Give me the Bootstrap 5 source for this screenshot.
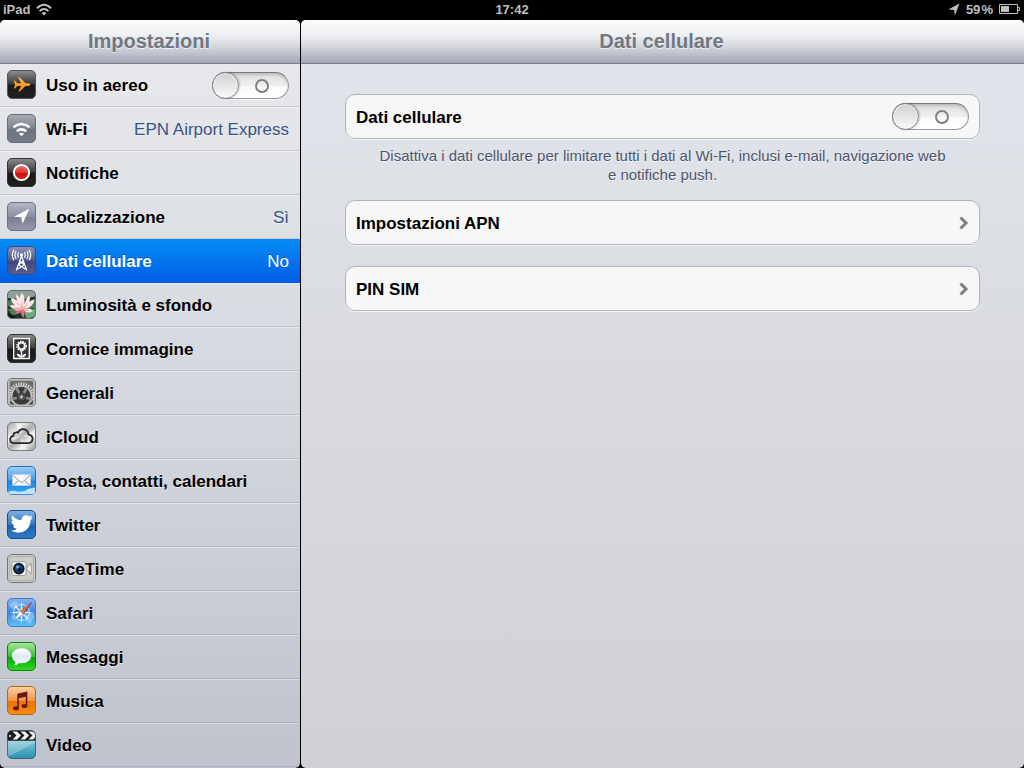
<!DOCTYPE html>
<html lang="it">
<head>
<meta charset="utf-8">
<meta name="viewport" content="width=device-width, initial-scale=1">
<title>Impostazioni</title>
<link href="https://cdn.jsdelivr.net/npm/bootstrap@5.3.0/dist/css/bootstrap.min.css" rel="stylesheet">
<style>
  body { background: #000; font-family: "Liberation Sans", Arial, sans-serif; font-size: 17px; line-height: 22px; color: #000; }
  .status-bar { height: 20px; padding: 0 3px; color: #bfbfbf; font-size: 13px; line-height: 20px; font-weight: bold; }
  .status-bar > div { flex: 1 1 0; gap: 6px; }
  .status-bar svg { display: block; }
  .side-pane { flex: 0 0 300px; background: linear-gradient(#e9eaee, #dcdfe4 30%, #bfc3cd); border-radius: 5px; overflow: hidden; }
  .main-pane { background: linear-gradient(#e2e6ec, #d9dbe0 45%, #d0d1d5); border-radius: 5px; overflow: hidden; }
  .pane-title { position: relative; z-index: 2; height: 44px; margin: 0; padding-right: 2px; font-size: 20px; line-height: 42px; font-weight: bold; text-align: center; color: #717880; text-shadow: 0 1px 0 #eceef2; background: linear-gradient(#fbfbfc, #eff0f3 35%, #d6d8de 60%, #a4a7b7); border-bottom: 1px solid #767b8e; }
  .settings-list { margin-top: -1px; }
  .settings-row { height: 44px; padding: 6px 11px 0 7px; gap: 10px; line-height: 32px; font-weight: bold; color: #000; text-decoration: none; border-top: 1px solid rgba(255,255,255,.35); border-bottom: 1px solid rgba(60,70,85,.15); text-shadow: 0 1px 0 rgba(255,255,255,.5); }
  .settings-row svg { flex: none; width: 29px; height: 29px; }
  .settings-row .row-value { font-weight: normal; color: #385487; }
  .settings-row .toggle { margin-top: 2px; }
  .settings-row.current { color: #fff; background: linear-gradient(#058cf5, #015de6); border-top-color: #0b86ec; border-bottom-color: #015de6; text-shadow: 0 -1px 0 rgba(0,0,0,.3); }
  .settings-row.current .row-value { color: #fff; }
  .group-area { padding: 30px 44px; }
  .group-list { gap: 21px; }
  .group-box { min-height: 45px; padding: 0 10px; color: #000; font-weight: bold; text-decoration: none; background: #f7f7f7; border: 1px solid #b0b3b8; border-radius: 10px; box-shadow: 0 1px 0 #f4f5f7; }
  .group-box .box-label { padding-top: 2px; }
  .group-note { margin: 7px 0 16px; padding: 0 30px; font-size: 15px; line-height: 19px; text-align: center; color: #4c566c; text-shadow: 0 1px 0 #f4f5f7; }
  .toggle { appearance: none; position: relative; flex: none; width: 77px; height: 27px; margin: 0; border: 1px solid #999; border-top-color: #777; border-radius: 14px; background: linear-gradient(#dedede, #efefef 50%, #fbfbfb 55%, #fff); box-shadow: inset 0 2px 3px rgba(0,0,0,.16), 0 1px 0 rgba(255,255,255,.6); }
  .toggle::before { content: ""; position: absolute; left: -1px; top: -1px; width: 27px; height: 27px; border: 1px solid #858585; border-radius: 50%; background: linear-gradient(#d0d0d0, #fbfbfb); box-shadow: inset 0 0 0 1px #f2f2f2, 1px 0 2px rgba(0,0,0,.2); }
  .toggle::after { content: ""; position: absolute; left: 42px; top: 6px; width: 14px; height: 14px; border: 2px solid #808080; border-radius: 50%; }
  .toggle:checked::before { left: 49px; }
  .toggle:checked::after { left: 14px; width: 2px; border-radius: 0; border-width: 0 0 0 2px; }
</style>
</head>
<body class="d-flex flex-column min-vh-100">
<svg width="0" height="0" class="position-absolute" aria-hidden="true">
  <defs>
    <linearGradient id="gBlack" x1="0" y1="0" x2="0" y2="1"><stop offset="0" stop-color="#8d8d8d"/><stop offset=".48" stop-color="#3b3b3b"/><stop offset=".52" stop-color="#1a1a1a"/><stop offset="1" stop-color="#202020"/></linearGradient>
    <linearGradient id="gGrey" x1="0" y1="0" x2="0" y2="1"><stop offset="0" stop-color="#a9adb4"/><stop offset=".5" stop-color="#7d838d"/><stop offset=".52" stop-color="#6d747f"/><stop offset="1" stop-color="#737a85"/></linearGradient>
    <linearGradient id="gLav" x1="0" y1="0" x2="0" y2="1"><stop offset="0" stop-color="#b6b9c5"/><stop offset=".5" stop-color="#8c8fa1"/><stop offset=".52" stop-color="#7b7e91"/><stop offset="1" stop-color="#9799aa"/></linearGradient>
    <linearGradient id="gIndigo" x1="0" y1="0" x2="0" y2="1"><stop offset="0" stop-color="#8b92b8"/><stop offset=".5" stop-color="#535a8b"/><stop offset=".52" stop-color="#434879"/><stop offset="1" stop-color="#5b5d90"/></linearGradient>
    <linearGradient id="gPlane" x1="0" y1="0" x2="0" y2="1"><stop offset="0" stop-color="#ffc04b"/><stop offset="1" stop-color="#f47d08"/></linearGradient>
    <linearGradient id="gRed" x1="0" y1="0" x2="0" y2="1"><stop offset="0" stop-color="#ef7777"/><stop offset=".5" stop-color="#dd3636"/><stop offset=".52" stop-color="#cc0d0d"/><stop offset="1" stop-color="#e32222"/></linearGradient>
    <linearGradient id="gSteel" x1="0" y1="0" x2="1" y2="1"><stop offset="0" stop-color="#a4a4a4"/><stop offset=".3" stop-color="#e9e9e9"/><stop offset=".5" stop-color="#adadad"/><stop offset=".7" stop-color="#efefef"/><stop offset="1" stop-color="#979797"/></linearGradient>
    <linearGradient id="gSky" x1="0" y1="0" x2="0" y2="1"><stop offset="0" stop-color="#9fd0f8"/><stop offset=".48" stop-color="#3b9ef0"/><stop offset=".52" stop-color="#1d86e6"/><stop offset="1" stop-color="#36a7f3"/></linearGradient>
    <linearGradient id="gSafari" x1="0" y1="0" x2="0" y2="1"><stop offset="0" stop-color="#86b4f0"/><stop offset=".5" stop-color="#3d86e3"/><stop offset="1" stop-color="#5cc4fb"/></linearGradient>
    <linearGradient id="gTwit" x1="0" y1="0" x2="0" y2="1"><stop offset="0" stop-color="#7eb3e4"/><stop offset=".5" stop-color="#3277bd"/><stop offset=".52" stop-color="#1c61aa"/><stop offset="1" stop-color="#2d7cc7"/></linearGradient>
    <linearGradient id="gGreen" x1="0" y1="0" x2="0" y2="1"><stop offset="0" stop-color="#a9e8a0"/><stop offset=".5" stop-color="#3dbd3a"/><stop offset=".52" stop-color="#0aa30b"/><stop offset="1" stop-color="#2fdc1e"/></linearGradient>
    <linearGradient id="gBubble" x1="0" y1="0" x2="0" y2="1"><stop offset="0" stop-color="#fff"/><stop offset=".5" stop-color="#dfe7f3"/><stop offset="1" stop-color="#fbfdff"/></linearGradient>
    <linearGradient id="gOrange" x1="0" y1="0" x2="0" y2="1"><stop offset="0" stop-color="#fbd3a4"/><stop offset=".5" stop-color="#f0934a"/><stop offset=".52" stop-color="#ec6f0a"/><stop offset="1" stop-color="#fb8f10"/></linearGradient>
    <linearGradient id="gTeal" x1="0" y1="0" x2="0" y2="1"><stop offset="0" stop-color="#d3eaf1"/><stop offset=".5" stop-color="#6db8ce"/><stop offset="1" stop-color="#2590ae"/></linearGradient>
    <clipPath id="tile"><rect x=".5" y=".5" width="28" height="28" rx="4.5"/></clipPath>
  </defs>
</svg>

<header class="status-bar d-flex">
  <div class="d-flex"><span>iPad</span>
    <svg width="16" height="20" viewBox="0 0 16 20" aria-label="Wi-Fi"><g transform="translate(0 1)" fill="none" stroke="#bfbfbf" stroke-width="2"><path d="M1 7.200Q8 .4 15 7.200M3.600 10Q8 6 12.400 10"/><path d="M5.600 12Q8 10 10.400 12L8 14.400Z" fill="#bfbfbf" stroke="none"/></g></svg>
  </div>
  <time class="text-center">17:42</time>
  <div class="d-flex justify-content-end">
    <svg width="12" height="20" viewBox="0 0 12 20" aria-label="Localizzazione"><path d="M11.600 3.600 6.800 15.400 6.200 10 .2 9.600Z" fill="#bfbfbf"/></svg>
    <span>59&#8202;%</span>
    <svg width="22" height="20" viewBox="0 0 22 20" aria-label="Batteria" class="ms-n1"><path d="M.5 4.500h18v9H.5Z" fill="none" stroke="#bfbfbf"/><path d="M2 6h8v6H2Z" fill="#bfbfbf"/><path d="M19 7.500h1.500v3H19" fill="none" stroke="#bfbfbf"/></svg>
  </div>
</header>

<div class="d-flex flex-grow-1" style="gap: 1px">
  <aside class="side-pane">
    <h1 class="pane-title">Impostazioni</h1>
    <nav class="settings-list d-flex flex-column" aria-label="Impostazioni">
      <div class="settings-row d-flex align-items-start">
        <svg viewBox="0 0 29 29"><rect x=".5" y=".5" width="28" height="28" rx="4.5" fill="url(#gBlack)" stroke="#555"/><path d="M6.800 10.800h1.200l2.400 2.500h3.800L11.200 7.600h1.600l5.700 5.700h2.700q2.300.3 2.300 1.300t-2.300 1.300h-2.700L12.800 21.600h-1.600l3-5.700h-3.800L8 18.400H6.800l1.300-3.800Z" fill="url(#gPlane)"/></svg>
        <label for="airplane" class="flex-grow-1">Uso in aereo</label>
        <input class="toggle" type="checkbox" role="switch" id="airplane">
      </div>
      <a href="#wifi" class="settings-row d-flex align-items-start">
        <svg viewBox="0 0 29 29"><rect x=".5" y=".5" width="28" height="28" rx="4.5" fill="url(#gGrey)" stroke="#686e78"/><path d="M6.400 13.200Q14.500 6.800 22.600 13.200M9.700 17.200Q14.500 13.400 19.300 17.200" fill="none" stroke="#fff" stroke-width="2.600"/><path d="M11.900 19.700Q14.500 17.800 17.100 19.700L14.500 22.300Z" fill="#fff"/></svg>
        <span class="flex-grow-1">Wi-Fi</span><span class="row-value">EPN Airport Express</span>
      </a>
      <a href="#notifiche" class="settings-row d-flex align-items-start">
        <svg viewBox="0 0 29 29"><rect x=".5" y=".5" width="28" height="28" rx="4.5" fill="url(#gBlack)" stroke="#333"/><circle cx="14.500" cy="14.500" r="7.600" fill="url(#gRed)" stroke="#fff" stroke-width="2"/></svg>
        <span class="flex-grow-1">Notifiche</span>
      </a>
      <a href="#localizzazione" class="settings-row d-flex align-items-start">
        <svg viewBox="0 0 29 29"><rect x=".5" y=".5" width="28" height="28" rx="4.5" fill="url(#gLav)" stroke="#6d7083"/><path d="M22.300 6.800 15.600 21.800 14.200 15.200 7 14.800Z" fill="#fff"/></svg>
        <span class="flex-grow-1">Localizzazione</span><span class="row-value">Sì</span>
      </a>
      <a href="#dati" class="settings-row current d-flex align-items-start" aria-current="page">
        <svg viewBox="0 0 29 29"><rect x=".5" y=".5" width="28" height="28" rx="4.5" fill="url(#gIndigo)" stroke="#3e4680"/><g fill="none" stroke="#fff" stroke-width="1.200"><path d="M14.500 10 9.200 24.500M14.500 10 19.800 24.500M12.700 15l4.700 3.800-7 4.500M16.300 15l-4.700 3.800 7 4.500"/><path d="M11.600 6.300Q10 9 11.600 11.700M17.400 6.300Q19 9 17.400 11.700M9.200 5Q6.700 9 9.200 13M19.800 5Q22.300 9 19.800 13M7 3.900Q3.600 9 7 14.100M22 3.900Q25.400 9 22 14.100"/></g><circle cx="14.500" cy="8.800" r="1.600" fill="#fff"/></svg>
        <span class="flex-grow-1">Dati cellulare</span><span class="row-value">No</span>
      </a>
      <a href="#sfondo" class="settings-row d-flex align-items-start">
        <svg viewBox="0 0 29 29"><g clip-path="url(#tile)"><path d="M0 0h29v29H0Z" fill="#22332c"/><path d="M0 0h29v6L18 9 0 8Z" fill="#8e9f98"/><path d="M0 12Q6 7 13 13L8 17 0 16ZM19 13 29 9v9l-8 1ZM1 19l9-1 3 5-8 3Z" fill="#527d56"/><path d="M17 23l12-5v8l-9 3Z" fill="#6bab79"/><path d="M0 22l8 4v3H0Z" fill="#121d1a"/><path d="M15 19Q10 10 15 2.500q4.500 7 1.500 16Q18 9 22.500 5q2 8-5 13 4-8 10-8.500-1 7.500-10 9.500 6-1.500 8.500 2-5 3-9 0Q11 21 3 17q0-3 5-1.500Q4 12 4 8q6 0 9 7Q8 9 9.500 4q6 6 5.500 15Z" fill="#fbe6e8"/><path d="M15 18 9 12.500q4 1 5 4.500l1.200-7 1 8 5.300-5.500-3.500 6.500 5 1-6 1.500L9 21l-4-3q6-1 10 0Z" fill="#efa9b4"/><path d="M13.500 20l3-.5 3.500 4-3-1 .2 5.500q-3-2-3.500-5.500L8 24.500q1-3.500 5.500-4.500Z" fill="#dd6d82"/><path d="M13.500 16.500l1.800 1 2.200-1-.8 3h-2.400Z" fill="#e4c95e"/></g><rect x=".5" y=".5" width="28" height="28" rx="4.5" fill="none" stroke="#5f6f68"/></svg>
        <span class="flex-grow-1">Luminosità e sfondo</span>
      </a>
      <a href="#cornice" class="settings-row d-flex align-items-start">
        <svg viewBox="0 0 29 29"><rect x=".5" y=".5" width="28" height="28" rx="4.5" fill="url(#gBlack)" stroke="#333"/><path d="M6.700 4.500h15.600v20H6.700Z" fill="#343434" stroke="#fff" stroke-width="1.300"/><circle cx="14.500" cy="12" r="3.300" fill="none" stroke="#fff" stroke-width="1.800"/><circle cx="14.500" cy="12" r="4.700" fill="none" stroke="#fff" stroke-width="1.300" stroke-dasharray="1.500 1"/><path d="M14.500 16.500V24" stroke="#fff" stroke-width="1.300"/><path d="M14.500 23.500Q10 23 9.800 19.700q4 .3 4.700 3.800.7-3.500 4.700-3.800-.2 3.300-4.700 3.800Z" fill="#fff"/></svg>
        <span class="flex-grow-1">Cornice immagine</span>
      </a>
      <a href="#generali" class="settings-row d-flex align-items-start">
        <svg viewBox="0 0 29 29"><rect x=".5" y=".5" width="28" height="28" rx="4.5" fill="#b8b8b8" stroke="#777"/><g clip-path="url(#tile)"><path d="M2.500 2.500h24v24h-24Z" fill="#6d6d6d"/><circle cx="14.500" cy="18" r="12.400" fill="none" stroke="#e0e0e0" stroke-width="2.600" stroke-dasharray="1.300 1.300"/><circle cx="14.500" cy="18" r="11" fill="#c2c2c2"/><circle cx="14.500" cy="18" r="9.200" fill="#3a3a3a"/><path d="M14.500 19 4.500 21M14.500 19l10 2M14.500 19 9 9.500M14.500 19l5.500-9.500" stroke="#8c8c8c" stroke-width="2.600"/><circle cx="14.500" cy="19" r="4.200" fill="#555" stroke="#2c2c2c"/><circle cx="14.500" cy="19" r="1.400" fill="#c8c8c8"/><path d="M3 22.500q2.500 3 6 4.500H3ZM26 22.500q-2.500 3-6 4.500h6Z" fill="#484848"/></g><rect x="1.800" y="1.800" width="25.400" height="25.400" rx="3.500" fill="none" stroke="#bdbdbd" stroke-width="1.400"/></svg>
        <span class="flex-grow-1">Generali</span>
      </a>
      <a href="#icloud" class="settings-row d-flex align-items-start">
        <svg viewBox="0 0 29 29"><rect x=".5" y=".5" width="28" height="28" rx="4.5" fill="url(#gSteel)" stroke="#7b7b7b"/><path d="M14.500 14.500 8 1h6ZM14.500 14.500 28 8v7ZM14.500 14.500 20 28h-7ZM14.500 14.500 1 21v-7Z" fill="#fff" opacity=".45"/><path d="M7.400 21.200Q3.200 21 3.200 17.400q0-3 3.200-3.600-.2-3 2.700-3.500 1-.2 1.800.3 1.800-3.600 5.400-3.400 4.600.4 5.100 5.200 4 .8 4.200 4.400-.2 4.200-4.500 4.400Z" fill="none" stroke="#272727" stroke-width="1.800"/></svg>
        <span class="flex-grow-1">iCloud</span>
      </a>
      <a href="#posta" class="settings-row d-flex align-items-start">
        <svg viewBox="0 0 29 29"><rect x=".5" y=".5" width="28" height="28" rx="4.5" fill="url(#gSky)" stroke="#2670b8"/><g clip-path="url(#tile)"><path d="M1 26q5-2 9-.5 7 1 11-2.500 3-1 7-1.500v7H1Z" fill="#fff" opacity=".7"/></g><path d="M5.500 8.500h18v11h-18Z" fill="#f7f7f7" stroke="#c6d0da" stroke-width=".8"/><path d="M5.800 9 13.400 16q1.200 1 2.400 0L23.300 9M5.800 19.400l6-5M23.300 19.400l-6-5" fill="none" stroke="#909aa5"/></svg>
        <span class="flex-grow-1">Posta, contatti, calendari</span>
      </a>
      <a href="#twitter" class="settings-row d-flex align-items-start">
        <svg viewBox="0 0 29 29"><rect x=".5" y=".5" width="28" height="28" rx="4.5" fill="url(#gTwit)" stroke="#134e91"/><path d="M4.100 20.600q3.600.2 5.800-1.800-3.200-.4-4-3.100l1.900-.1Q4.500 14.400 4.400 10.800q.9.500 1.900.6-2.800-2.500-1.200-5.900 4 4.500 9.300 4.700.5-4.900 4.700-5 1.800 0 3.200 1.400l2.900-1q-.4 1.600-1.800 2.600l2.400-.5q-.8 1.300-2.200 2.200-.2 6.500-4.400 10-4.600 3.700-10.800 2.400-2.500-.5-4.300-1.700Z" fill="#fff"/></svg>
        <span class="flex-grow-1">Twitter</span>
      </a>
      <a href="#facetime" class="settings-row d-flex align-items-start">
        <svg viewBox="0 0 29 29"><rect x=".5" y=".5" width="28" height="28" rx="4.5" fill="#dededa" stroke="#737370"/><rect x="2.200" y="2.200" width="24.600" height="24.600" rx="3.500" fill="#cdcdc8" stroke="#96968f" stroke-width=".8"/><path d="M6.500 7.800h11q1.600 0 1.600 1.800v10q0 1.800-1.600 1.800h-11q-1.600 0-1.600-1.800v-10q0-1.800 1.600-1.800ZM19.500 14.500l4.700-5.300v10.600Z" fill="#f7f7f5" stroke="#888" stroke-width=".8"/><circle cx="11.800" cy="14.600" r="5.800" fill="#151b26"/><circle cx="11.800" cy="14.600" r="3.800" fill="#18407c"/><circle cx="10.700" cy="13" r="1.800" fill="#6d9bd1"/><circle cx="12.700" cy="15.600" r="1.800" fill="#071631"/></svg>
        <span class="flex-grow-1">FaceTime</span>
      </a>
      <a href="#safari" class="settings-row d-flex align-items-start">
        <svg viewBox="0 0 29 29"><rect x=".5" y=".5" width="28" height="28" rx="4.5" fill="url(#gSafari)" stroke="#3d7ebc"/><path d="M2 7q5-5 9-3l-1 6-5 1ZM18 17l8-3 1 5-4 7-4-3ZM4 17l5 2-2 6Z" fill="#a9d7fa" opacity=".6"/><circle cx="14.500" cy="14.500" r="8" fill="none" stroke="#dceefc" stroke-width=".9"/><path d="M14.500 2.500 15.700 13.300 26.500 14.500 15.700 15.700 14.500 26.500 13.300 15.700 2.500 14.500 13.300 13.300Z" fill="#eaf5fe"/><path d="M8 8l13 13" stroke="#eaf5fe" stroke-width="1.400"/><path d="M24.500 4.500 16.300 16 13 12.800Z" fill="#e0703a"/><path d="M5.800 23.500 13 12.800l3.300 3.200Z" fill="#fff" stroke="#60758a" stroke-width=".6"/><path d="M16.300 16 24.500 4.500" fill="none" stroke="#7f2c18" stroke-width=".9"/></svg>
        <span class="flex-grow-1">Safari</span>
      </a>
      <a href="#messaggi" class="settings-row d-flex align-items-start">
        <svg viewBox="0 0 29 29"><rect x=".5" y=".5" width="28" height="28" rx="4.5" fill="url(#gGreen)" stroke="#118114"/><path d="M14.600 6.200c5.500 0 9.600 3.200 9.600 7.500s-4.100 7.500-9.600 7.500q-1.300 0-2.500-.3-2 2.300-4.900 2.600 1.300-1.600 1.200-3.700Q4.900 17.500 4.900 13.700c0-4.300 4.200-7.500 9.700-7.500Z" fill="url(#gBubble)"/></svg>
        <span class="flex-grow-1">Messaggi</span>
      </a>
      <a href="#musica" class="settings-row d-flex align-items-start">
        <svg viewBox="0 0 29 29"><rect x=".5" y=".5" width="28" height="28" rx="4.5" fill="url(#gOrange)" stroke="#b5661f"/><g fill="#6b1a08"><path d="M10.300 7.800 20.300 5.600V20h-1.500V10.800L11.800 12.300V22.500h-1.500Z"/><ellipse cx="9" cy="22.300" rx="2.900" ry="2.100"/><ellipse cx="17.500" cy="20" rx="2.900" ry="2.100"/></g></svg>
        <span class="flex-grow-1">Musica</span>
      </a>
      <a href="#video" class="settings-row d-flex align-items-start">
        <svg viewBox="0 0 29 29"><g clip-path="url(#tile)"><path d="M0 0h29v29H0Z" fill="url(#gTeal)"/><path d="M0 27.500 29 12V10H0Z" fill="#fff" opacity=".25"/><path d="M0 0h29v10.800H0Z" fill="#1c1c1c"/><path d="M5.500 1.500h4.500l4 4-4 4H5.500l4-4ZM13.500 1.500H18l4 4-4 4h-4.500l4-4ZM21.500 1.500H26l4 4-4 4h-4.500l4-4Z" fill="#f2f2f2"/><circle cx="3" cy="6" r="1.200" fill="#bbb"/></g><rect x=".5" y=".5" width="28" height="28" rx="4.5" fill="none" stroke="#31454c" stroke-opacity=".7"/></svg>
        <span class="flex-grow-1">Video</span>
      </a>
    </nav>
  </aside>

  <main class="main-pane flex-grow-1">
    <h2 class="pane-title">Dati cellulare</h2>
    <div class="group-area">
      <div class="group-box d-flex align-items-center justify-content-between">
        <label class="box-label" for="cellular">Dati cellulare</label>
        <input class="toggle" type="checkbox" role="switch" id="cellular">
      </div>
      <p class="group-note">Disattiva i dati cellulare per limitare tutti i dati al Wi-Fi, inclusi e-mail, navigazione web e notifiche push.</p>
      <div class="group-list d-flex flex-column">
        <a href="#apn" class="group-box d-flex align-items-center justify-content-between"><span class="box-label">Impostazioni APN</span>
          <svg width="10" height="14" viewBox="0 0 10 14" aria-hidden="true"><path d="M1.500 1.500 7 7l-5.500 5.500" fill="none" stroke="#7f7f7f" stroke-width="3"/></svg></a>
        <a href="#pin" class="group-box d-flex align-items-center justify-content-between"><span class="box-label">PIN SIM</span>
          <svg width="10" height="14" viewBox="0 0 10 14" aria-hidden="true"><path d="M1.500 1.500 7 7l-5.500 5.500" fill="none" stroke="#7f7f7f" stroke-width="3"/></svg></a>
      </div>
    </div>
  </main>
</div>
<script src="https://cdn.jsdelivr.net/npm/bootstrap@5.3.0/dist/js/bootstrap.bundle.min.js"></script>
</body>
</html>
